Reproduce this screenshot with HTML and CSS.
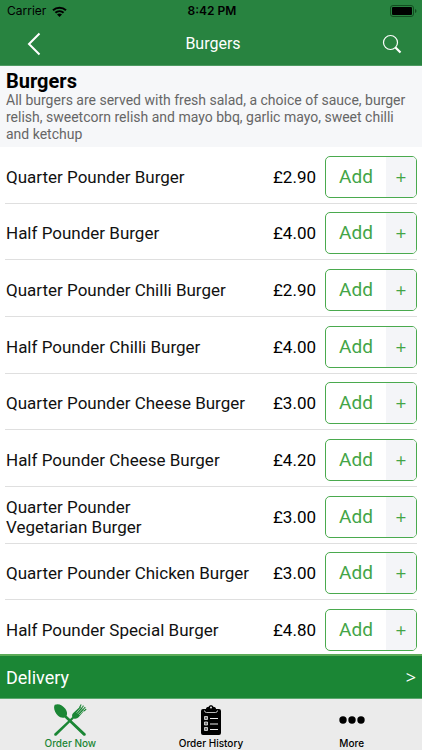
FILE: index.html
```
<!DOCTYPE html>
<html lang="en">
<head>
<meta charset="utf-8">
<meta name="viewport" content="width=device-width, initial-scale=1">
<title>Burgers</title>
<link rel="stylesheet" href="styles.css">
</head>
<body>
<div class="app">
  <header class="top">
    <div class="status">
      <div class="carrier">Carrier
        <svg width="15" height="11" viewBox="0 0 15 11" aria-hidden="true"><g fill="none" stroke="#000" stroke-width="2"><path d="M1 4.2a9.5 9.5 0 0 1 13 0"/><path d="M3.4 6.8a6 6 0 0 1 8.2 0"/></g><path d="M5 8.6a3.6 3.6 0 0 1 5 0L7.500 11z"/></svg>
      </div>
      <div class="time">8:42 PM</div>
      <svg class="battery" width="27" height="12" viewBox="0 0 27 12" aria-hidden="true"><rect x=".5" y=".5" width="23" height="11" rx="2.500" fill="none" stroke="#124d20"/><rect x="2" y="2" width="20" height="8" rx="1"/><path d="M25 4q1.500.5 1.500 2T25 8z" fill="#124d20"/></svg>
    </div>
    <div class="titlebar">
      <button class="icon-button" aria-label="Back"><svg width="14" height="24" viewBox="0 0 14 24"><path d="M12.500 1.500 2 12l10.500 10.500" fill="none" stroke="#fff" stroke-width="2"/></svg></button>
      <h1>Burgers</h1>
      <button class="icon-button" aria-label="Search"><svg width="20" height="20" viewBox="0 0 20 20" fill="none" stroke="#fff"><circle cx="8.500" cy="8.500" r="7" stroke-width="1.200"/><path d="m13.500 13.500 5 5" stroke-width="2.200"/></svg></button>
    </div>
  </header>
  <section class="intro">
    <h2>Burgers</h2>
    <p>All burgers are served with fresh salad, a choice of sauce, burger relish, sweetcorn relish and mayo bbq, garlic mayo, sweet chilli and ketchup</p>
  </section>
  <ul class="menu">
    <li><span class="name">Quarter Pounder Burger</span><span class="price">£2.90</span><button class="add"><span>Add</span><span class="plus">+</span></button></li>
    <li><span class="name">Half Pounder Burger</span><span class="price">£4.00</span><button class="add"><span>Add</span><span class="plus">+</span></button></li>
    <li><span class="name">Quarter Pounder Chilli Burger</span><span class="price">£2.90</span><button class="add"><span>Add</span><span class="plus">+</span></button></li>
    <li><span class="name">Half Pounder Chilli Burger</span><span class="price">£4.00</span><button class="add"><span>Add</span><span class="plus">+</span></button></li>
    <li><span class="name">Quarter Pounder Cheese Burger</span><span class="price">£3.00</span><button class="add"><span>Add</span><span class="plus">+</span></button></li>
    <li><span class="name">Half Pounder Cheese Burger</span><span class="price">£4.20</span><button class="add"><span>Add</span><span class="plus">+</span></button></li>
    <li><span class="name">Quarter Pounder Vegetarian Burger</span><span class="price">£3.00</span><button class="add"><span>Add</span><span class="plus">+</span></button></li>
    <li><span class="name">Quarter Pounder Chicken Burger</span><span class="price">£3.00</span><button class="add"><span>Add</span><span class="plus">+</span></button></li>
    <li><span class="name">Half Pounder Special Burger</span><span class="price">£4.80</span><button class="add"><span>Add</span><span class="plus">+</span></button></li>
  </ul>
  <button class="delivery"><span>Delivery</span><span class="more">&gt;</span></button>
  <nav class="tabs">
    <a href="#order" class="active">
      <svg width="34" height="32" viewBox="0 0 34 32" aria-hidden="true"><g fill="#1b8635"><path d="M1.800.8C5.500-.8 9.500 1 12.300 4.800c1.900 2.600 2.100 5 1.300 7L32.500 29.500c1 1.500-.8 3-2.200 2L11.600 13.600c-2.200.7-4.700 0-6.800-2C1.800 8.300 0 3.500 1.800.8z"/><path d="m31.500 6.200-5.700 6.800c-1.500 1.700-3.300 2-5 1.500L3.500 31.500c-1.500 1-3-.6-2-2L19.300 13c-.6-1.700 0-3.200 1.500-4.500L27.300 2.500z"/></g><g stroke="#1b8635" stroke-width="1.100"><path d="m26.500 3.500 1.700-3M28.200 4.700l2.300-3M29.800 5.600l2.500-2.500M31 7l2.200-2"/></g><path d="m23.500 8.700 5.500-6.200M24.800 9.900l5.500-6M26.200 11l5.300-5.700" stroke="#ebebeb" stroke-width=".6"/></svg>
      <span>Order Now</span>
    </a>
    <a href="#history">
      <svg width="20" height="30" viewBox="0 0 20 30" aria-hidden="true"><path d="M2 4h3c0-1.500 1-2 2.500-2C8-.5 12-.5 12.500 2 14 2 15 2.500 15 4h3q2 0 2 2v22q0 2-2 2H2q-2 0-2-2V6q0-2 2-2z"/><circle cx="10" cy="2.500" r="1" fill="#ebebeb"/><path d="M3.500 5.500q0 2 2 2h9q2 0 2-2" fill="none" stroke="#ebebeb" stroke-width=".8"/><path d="M3.500 11.500h3v3h-3zm0 5.500h3v3h-3zm0 5.500h3v3h-3z" fill="#777" stroke="#ebebeb" stroke-width=".8"/><path d="M9 13.500h8M9 19h8M9 24.500h8" stroke="#ebebeb" stroke-width="1.200"/></svg>
      <span>Order History</span>
    </a>
    <a href="#more">
      <svg width="26" height="30" viewBox="0 0 26 30" aria-hidden="true"><circle cx="4" cy="15" r="3.700"/><circle cx="13" cy="15" r="3.700"/><circle cx="22" cy="15" r="3.700"/></svg>
      <span>More</span>
    </a>
  </nav>
</div>
</body>
</html>
```
FILE: styles.css
```
* { box-sizing: border-box; }
body { margin: 0; background: #fff; color: #111; font-family: "Roboto", "Liberation Sans", sans-serif; }
h1, h2, p, ul { margin: 0; padding: 0; font-weight: 400; }
button { font: inherit; border: 0; padding: 0; background: none; cursor: pointer; }
a { color: inherit; text-decoration: none; }
svg { display: block; }

.app { display: flex; flex-direction: column; min-height: 100vh; }

.top { background: #288340; border-bottom: 1px solid #4e9a62; }
.status { display: grid; grid-template-columns: 1fr auto 1fr; align-items: center; height: 22px; padding: 0 5px 0 7px; color: #000; font-family: "Inter", sans-serif; font-size: 12px; line-height: 22px; }
.carrier { display: flex; align-items: center; gap: 6px; }
.time { font-weight: 600; }
.battery { justify-self: end; }
.titlebar { display: flex; align-items: center; justify-content: space-between; height: 43px; padding: 0 14px 0 18px; color: #fff; }
.titlebar h1 { font-size: 16px; line-height: 24px; }
.icon-button { display: grid; place-items: center; width: 32px; height: 32px; }

.intro { padding: 4px 6px; background: #f6f7f9; }
.intro h2 { color: #000; font-size: 20px; font-weight: 700; line-height: 22px; }
.intro p { color: #666; font-size: 14px; line-height: 17px; }

/* The last row runs slightly under the delivery bar. */
.menu { display: grid; grid-auto-rows: 1fr; flex: 1; margin: 0 5px -3px; list-style: none; }
.menu li { display: flex; align-items: center; gap: 9px; padding: 4px 0 0 1px; border-bottom: 1px solid #dfdfdf; }
.name { flex: 1; font-size: 17px; line-height: 20px; text-wrap: balance; }
.price { color: #000; font-size: 17px; line-height: 20px; }
.add { display: grid; grid-template-columns: 2fr 1fr; width: 92px; height: 42px; border: 1px solid #4aaa4e; border-radius: 5px; overflow: hidden; background: #fff; color: #43a547; font-size: 19px; line-height: 40px; }
.plus { background: #f4f5f8; font-family: "Open Sans", sans-serif; }

.delivery { position: relative; display: flex; align-items: center; justify-content: space-between; height: 45px; padding: 0 6px; border-top: 2px solid #5cab58; border-bottom: 1px solid #5ca76e; background: #1b8635; color: #fff; font-size: 18px; }
.more { font-family: "Open Sans", sans-serif; }

.tabs { display: grid; grid-template-columns: repeat(3, 1fr); height: 51px; background: #ebebeb; color: #000; font-family: "Inter", sans-serif; font-size: 10px; font-weight: 500; line-height: 12px; }
.tabs a { display: flex; flex-direction: column; align-items: center; justify-content: flex-end; gap: 1px; padding-bottom: 1px; }
.tabs svg { height: 32px; }
.tabs .active { color: #1b8635; }
```
